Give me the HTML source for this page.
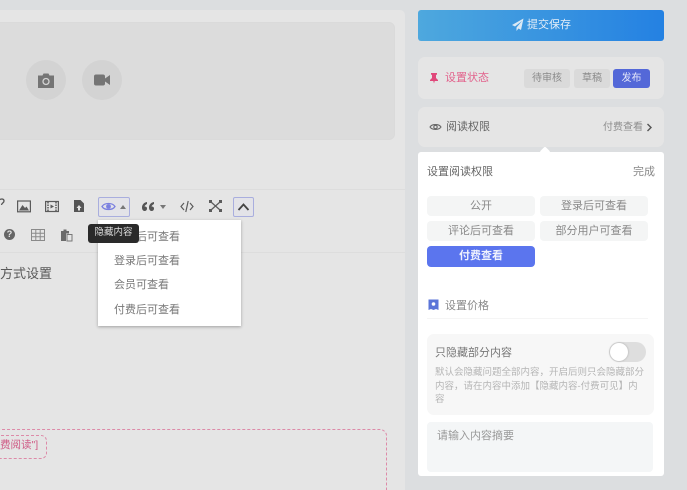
<!DOCTYPE html>
<html lang="zh"><head><meta charset="utf-8"><style>
html,body{margin:0;padding:0;width:687px;height:490px;overflow:hidden}
body{background:#dcdee0;font-family:"Liberation Sans","Noto Sans CJK SC",sans-serif;color:#666}
#w{position:absolute;left:0;top:0;width:687px;height:490px;overflow:hidden;background:#dcdee0}
.a{position:absolute;white-space:nowrap}
.t{position:absolute;white-space:nowrap;line-height:16px}
svg{position:absolute;display:block}
.opt{position:absolute;height:20px;line-height:20px;border-radius:4px;background:#f4f5f5;text-align:center;font-size:11px;color:#888}
</style></head><body><div id="w">
<div class="a" style="left:-10px;top:10px;width:415px;height:490px;background:#e5e5e5;border-radius:5px"></div>
<div class="a" style="left:-10px;top:22px;width:405px;height:118px;background:#dcdcdc;border:1px solid #dadada;box-sizing:border-box;border-radius:6px"></div>
<div class="a" style="left:26px;top:60px;width:40px;height:40px;border-radius:50%;background:#d3d3d3"></div>
<div class="a" style="left:82px;top:60px;width:40px;height:40px;border-radius:50%;background:#d3d3d3"></div>
<svg style="left:37px;top:71px" width="18" height="18" viewBox="0 0 18 18"><path d="M1 4.500h4.500L6.500 2.500h5l1 2H17V17H1z" fill="#757575"/><circle cx="9" cy="10.500" r="3" fill="none" stroke="#d3d3d3" stroke-width="1.300"/></svg>
<svg style="left:93px;top:72px" width="18" height="16" viewBox="0 0 18 16"><rect x="1" y="2.500" width="11" height="11" rx="2" fill="#757575"/><path d="M12 6.500 17 3v10l-5-3.500z" fill="#757575"/></svg>
<div class="a" style="left:0;top:189px;width:405px;height:1px;background:#dddddd"></div>
<div class="a" style="left:0;top:252px;width:405px;height:1px;background:#dddddd"></div>
<svg style="left:0;top:198px" width="5" height="10" viewBox="0 0 5 10"><path d="M0 1.500C2 .5 4 1 4 3 4 5 1.500 5 1.500 7" fill="none" stroke="#555" stroke-width="1.300"/></svg>
<svg style="left:17px;top:200px" width="14" height="13" viewBox="0 0 14 13"><rect x=".6" y="1" width="12.800" height="10.800" fill="none" stroke="#5b5b5b" stroke-width="1.200"/><path d="M2 10.500 5.500 5l2.500 3 1.500-1.500 2.500 4z" fill="#5b5b5b"/></svg>
<svg style="left:45px;top:200px" width="14" height="13" viewBox="0 0 14 13"><rect x=".6" y="1.500" width="12.800" height="10" fill="none" stroke="#5b5b5b" stroke-width="1.200"/><path d="M3 2v9M11 2v9" stroke="#5b5b5b" stroke-width="1.500" stroke-dasharray="1.500 1"/><path d="M5.500 4.500 9 6.500 5.500 8.500z" fill="#5b5b5b"/></svg>
<svg style="left:73px;top:199px" width="12" height="14" viewBox="0 0 12 14"><path d="M1 1h6.500L11 4.500V13H1z" fill="#555"/><path d="M6 6 3.500 9H5v2.500h2V9h1.500z" fill="#e5e5e5"/></svg>
<div class="a" style="left:98px;top:197px;width:32px;height:20px;border:1px solid #a9aede;box-sizing:border-box;border-radius:2px;background:#e3e3e8"></div>
<svg style="left:101px;top:200px" width="15" height="13" viewBox="0 0 15 13"><path d="M1 6.500C3.500 2.500 11.500 2.500 14 6.500 11.500 10.500 3.500 10.500 1 6.500z" fill="none" stroke="#7b80e0" stroke-width="1.300"/><circle cx="7.500" cy="6.500" r="2.400" fill="#7b80e0"/></svg>
<div class="a" style="left:120px;top:205px;width:0;height:0;border:3px solid transparent;border-top:0;border-bottom:4px solid #777"></div>
<svg style="left:141px;top:201px" width="14" height="11" viewBox="0 0 14 11"><path d="M6 1C3 1.500 1 3.500 1 6.500 1 8.500 2 10 3.500 10S6 9 6 7.500 5 5.500 3.500 5.500C3.800 4.500 4.800 3.500 6 3zM13 1C10 1.500 8 3.500 8 6.500 8 8.500 9 10 10.500 10S13 9 13 7.500 12 5.500 10.500 5.500C10.800 4.500 11.800 3.500 13 3z" fill="#555"/></svg>
<div class="a" style="left:160px;top:205px;width:0;height:0;border:3px solid transparent;border-bottom:0;border-top:4px solid #777"></div>
<svg style="left:180px;top:200px" width="14" height="13" viewBox="0 0 14 13"><path d="M4 3 1 6.500 4 10M10 3l3 3.500L10 10M8.200 1 5.800 12" fill="none" stroke="#5b5b5b" stroke-width="1.200"/></svg>
<svg style="left:208px;top:199px" width="15" height="14" viewBox="0 0 15 14"><path d="M3 3l9 8M12 3l-9 8" stroke="#5b5b5b" stroke-width="1.200"/><path d="M1 1h3v3H1zM11 1h3v3h-3zM1 10h3v3H1zM11 10h3v3h-3z" fill="#5b5b5b"/></svg>
<div class="a" style="left:233px;top:197px;width:21px;height:20px;border:1px solid #a9aede;box-sizing:border-box;border-radius:2px;background:#e3e3e8"></div>
<svg style="left:237px;top:202px" width="13" height="10" viewBox="0 0 13 10"><path d="M1.500 8 6.500 2.500 11.500 8" fill="none" stroke="#444" stroke-width="1.800"/></svg>
<div class="a" style="left:4px;top:229px;width:11px;height:11px;border-radius:50%;background:#666;color:#e5e5e5;font:bold 9px/11px 'Liberation Sans',sans-serif;text-align:center">?</div>
<svg style="left:31px;top:229px" width="14" height="12" viewBox="0 0 14 12"><path d="M.5.500h13v11H.5zM.5 4.200h13M.5 7.800h13M4.800.5v11M9.200.5v11" fill="none" stroke="#8a8a8a"/></svg>
<svg style="left:60px;top:228px" width="13" height="14" viewBox="0 0 13 14"><path d="M1 3h2.500V1.500h3V3H9v2.500H6V13H1z" fill="#6a6a6a"/><path d="M7 6.500h5V13H7z" fill="none" stroke="#777"/></svg>
<div class="t" style="left:0;top:266px;font-size:13px;line-height:16px;color:#595959">方式设置</div>
<div class="a" style="left:98px;top:220px;width:143px;height:106px;background:#fff;box-shadow:0 1px 3px rgba(0,0,0,.3)"></div>
<div class="t" style="left:114px;top:229px;font-size:11px;color:#777">公开后可查看</div>
<div class="t" style="left:114px;top:253px;font-size:11px;color:#777">登录后可查看</div>
<div class="t" style="left:114px;top:277px;font-size:11px;color:#777">会员可查看</div>
<div class="t" style="left:114px;top:302px;font-size:11px;color:#777">付费后可查看</div>
<div class="a" style="left:88px;top:224px;width:51px;height:19px;background:#2a2a2a;border-radius:3px;color:#ddd;font-size:9.500px;line-height:18px;text-align:center">隐藏内容</div>
<div class="a" style="left:-40px;top:429px;width:427px;height:80px;border:1px dashed #dd8aa8;box-sizing:border-box;border-radius:7px"></div>
<div class="a" style="left:-40px;top:435px;width:87px;height:24px;border:1px dashed #dd8aa8;box-sizing:border-box;border-radius:6px"></div>
<div class="t" style="left:0;top:437px;font-size:10.500px;color:#cf5a85">费阅读"]</div>

<div class="a" style="left:418px;top:10px;width:246px;height:31px;border-radius:3px;background:linear-gradient(90deg,#4ea8de,#2481e2)"></div>
<svg style="left:511px;top:18px" width="13" height="14" viewBox="0 0 13 14"><path d="M12.500.5 1 7l3 1.500L11 3 5.500 9.500V13l2-2.500 2.500 1.500z" fill="#dbe9f5"/></svg>
<div class="t" style="left:527px;top:17px;font-size:11px;color:#e4eef8">提交保存</div>
<div class="a" style="left:418px;top:57px;width:246px;height:42px;border-radius:7px;background:#e5e5e5"></div>
<svg style="left:429px;top:72px" width="10" height="12" viewBox="0 0 10 12"><path d="M2 1h6v1.500L7 3v3l2 2v1H5.700L5 11.500 4.300 9H1V8l2-2V3L2 2.500z" fill="#e0487a"/></svg>
<div class="t" style="left:445px;top:70px;font-size:11px;color:#e2628c">设置状态</div>
<div class="a" style="left:524px;top:69px;width:46px;height:19px;border-radius:3px;background:#dadada;color:#8a8a8a;font-size:10px;line-height:19px;text-align:center">待审核</div>
<div class="a" style="left:574px;top:69px;width:36px;height:19px;border-radius:3px;background:#dadada;color:#8a8a8a;font-size:10px;line-height:19px;text-align:center">草稿</div>
<div class="a" style="left:613px;top:69px;width:37px;height:19px;border-radius:3px;background:#5468d8;color:#e4e7fa;font-size:10px;line-height:19px;text-align:center">发布</div>
<div class="a" style="left:418px;top:107px;width:246px;height:40px;border-radius:7px;background:#e5e5e5"></div>
<svg style="left:429px;top:121px" width="13" height="12" viewBox="0 0 13 12"><path d="M1 6C3 2.800 10 2.800 12 6 10 9.200 3 9.200 1 6z" fill="none" stroke="#666" stroke-width="1.100"/><circle cx="6.500" cy="6" r="1.700" fill="none" stroke="#666" stroke-width="1.100"/></svg>
<div class="t" style="left:446px;top:119px;font-size:11px;color:#666">阅读权限</div>
<div class="t" style="left:603px;top:120px;font-size:10px;color:#8c8c8c">付费查看</div>
<svg style="left:645px;top:123px" width="8" height="10" viewBox="0 0 8 10"><path d="M2.500 1 6 4.500 2.500 8" fill="none" stroke="#555" stroke-width="1.400"/></svg>

<div class="a" style="left:418px;top:152px;width:246px;height:324px;border-radius:3px;background:#fff"></div>
<div class="a" style="left:541px;top:148px;width:8px;height:8px;background:#fff;transform:rotate(45deg);border-radius:2px"></div>
<div class="t" style="left:427px;top:164px;font-size:11px;color:#666">设置阅读权限</div>
<div class="t" style="left:633px;top:164px;font-size:11px;color:#888">完成</div>
<div class="opt" style="left:427px;top:196px;width:108px">公开</div>
<div class="opt" style="left:540px;top:196px;width:108px">登录后可查看</div>
<div class="opt" style="left:427px;top:221px;width:108px">评论后可查看</div>
<div class="opt" style="left:540px;top:221px;width:108px">部分用户可查看</div>
<div class="opt" style="left:427px;top:246px;width:108px;height:21px;background:#5b75ee;color:#eef1fd;font-weight:bold;font-size:11px">付费查看</div>
<svg style="left:428px;top:299px" width="11" height="12" viewBox="0 0 11 12"><path d="M.500.500h10V11L8 10 5.500 11 3 10 .500 11z" fill="#5b75d8"/><circle cx="5.500" cy="5" r="1.800" fill="#fff"/></svg>
<div class="t" style="left:445px;top:298px;font-size:11px;color:#888">设置价格</div>
<div class="a" style="left:427px;top:318px;width:221px;height:1px;background:#f5f5f5"></div>
<div class="a" style="left:427px;top:334px;width:227px;height:81px;border-radius:7px;background:#f7f7f7"></div>
<div class="t" style="left:435px;top:345px;font-size:11px;color:#777">只隐藏部分内容</div>
<div class="a" style="left:609px;top:342px;width:37px;height:20px;border-radius:10px;background:#dedede"></div>
<div class="a" style="left:610px;top:343px;width:18px;height:18px;border-radius:50%;background:#fff;box-shadow:0 0 2px rgba(0,0,0,.25)"></div>
<div class="t" style="left:435px;top:366px;font-size:9.500px;line-height:13.500px;color:#b5b5b5;width:212px;white-space:normal">默认会隐藏问题全部内容，开启后则只会隐藏部分内容，请在内容中添加【隐藏内容-付费可见】内容</div>
<div class="a" style="left:427px;top:422px;width:226px;height:50px;border-radius:4px;background:#f4f6f7"></div>
<div class="t" style="left:437px;top:428px;font-size:11px;color:#999">请输入内容摘要</div>
</div></body></html>
